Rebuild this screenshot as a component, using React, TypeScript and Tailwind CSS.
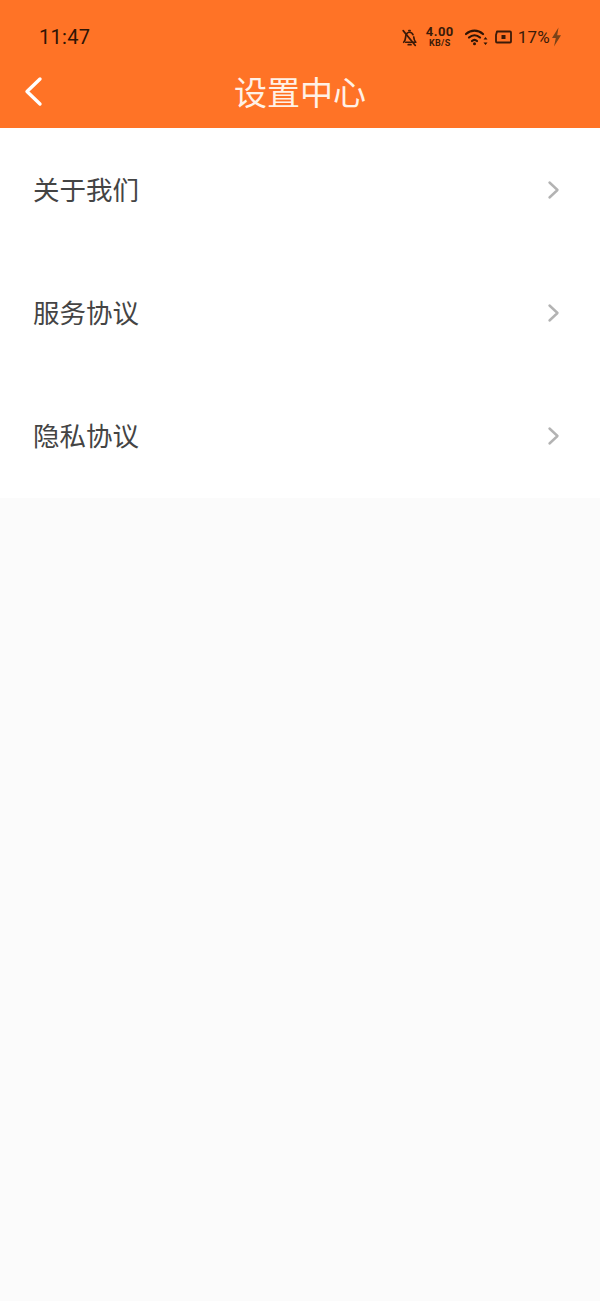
import React from 'react';

const cjk = 'font-["Noto_Sans_CJK_SC",sans-serif]';

// Status bar glyphs, drawn to match the phone's icons
const MutedBell = () => (
  <svg width="17" height="19" viewBox="0 0 16 18" fill="none" stroke="#3a1a08" strokeWidth="1.6" strokeLinecap="round" strokeLinejoin="round">
    <path d="M2.5 13.5c1.2-1.2 1.5-2.3 1.7-4.2C4.400 6.500 5.500 4 8 4c1.600 0 2.700.9 3.300 2.300" />
    <path d="M12 8.500c.2 2.200.6 3.700 2 5H4.500" />
    <path d="M6.800 15.800h2.600" />
    <path d="M7.400 2.500h1.200" />
    <path d="M2 2.500l11.500 14" />
  </svg>
);

const Wifi = () => (
  <svg width="23" height="18" viewBox="0 0 23 18" fill="none" stroke="#2e1405" strokeWidth="2.200" strokeLinecap="round">
    <path d="M1 6c5-4.500 12-4.500 17 0" />
    <path d="M4 9.500c3.300-3 7.700-3 11 0" />
    <path d="M7 13c1.600-1.500 3.400-1.500 5 0" />
    <circle cx="9.500" cy="15.800" r="1.500" fill="#2e1405" stroke="none" />
    <path d="M20.500 9l-2 2.500h4zM20.500 17l-2-2.500h4z" fill="#2e1405" stroke="none" />
  </svg>
);

const Battery = () => (
  <svg width="18" height="14" viewBox="0 0 18 14" fill="none">
    <path d="M3 1.500h13a1 1 0 0 1 1 1v9a1 1 0 0 1-1 1H3a1 1 0 0 1-1-1V5z" stroke="#3a1a08" strokeWidth="1.800" strokeLinejoin="round" />
    <rect x="7.500" y="5" width="4" height="4" fill="#3a1a08" />
  </svg>
);

const Bolt = () => (
  <svg width="11" height="20" viewBox="0 0 11 20">
    <path d="M7.500 0.500L1 11h3.800L3 19.500 10 8.200H6.200z" fill="#7a4218" />
  </svg>
);

const Chevron = () => (
  <svg width="13" height="20" viewBox="0 0 13 20" fill="none" stroke="#b3b3b3" strokeWidth="2.400" strokeLinecap="round" strokeLinejoin="round">
    <path d="M2.500 2.500L10.500 10L2.500 17.500" />
  </svg>
);

const Row = ({ label }: { label: string }) => (
  <div className="flex h-[123px] items-center justify-between pl-[33px] pr-[40px]">
    <span className={`${cjk} text-[26.5px] leading-none text-[#444444]`}>{label}</span>
    <Chevron />
  </div>
);

export default function App() {
  return (
    <div className="flex h-[1301px] w-[600px] flex-col overflow-hidden bg-[#fbfbfb]">
      <header className="h-[128px] bg-[#ff7326]">
        {/* system status bar */}
        <div className="flex h-[72px] items-center justify-between pl-[39px] pr-[38px]">
          <span className="font-['Roboto',sans-serif] text-[20px] leading-none tracking-[0.3px] text-[#2e1405] translate-y-[1px]">11:47</span>
          <div className="flex items-center translate-y-[1px]">
            <MutedBell />
            <div className="ml-[8px] flex flex-col items-center font-['Roboto',sans-serif] font-bold leading-none text-[#3a1a08]">
              <span className="text-[13px] leading-[12px] tracking-[0.5px]">4.00</span>
              <span className="text-[9px] leading-[10px] tracking-[0.3px]">KB/S</span>
            </div>
            <span className="ml-[11px] flex"><Wifi /></span>
            <span className="ml-[6px] flex"><Battery /></span>
            <span className="ml-[6px] font-['Roboto',sans-serif] text-[17px] leading-none text-[#3a1a08] tracking-[0.2px]">17%</span>
            <span className="ml-[1px] flex"><Bolt /></span>
          </div>
        </div>
        {/* title bar */}
        <div className="relative flex h-[40px] items-center justify-center">
          <svg className="absolute left-[22px] top-[3px]" width="22" height="32" viewBox="0 0 22 32" fill="none" stroke="#ffffff" strokeWidth="3.400" strokeLinecap="round" strokeLinejoin="round">
            <path d="M18 4L5 16.500L18 29" />
          </svg>
          <span className={`${cjk} text-[33px] leading-none text-[#fff1e6] -translate-y-[1px]`}>设置中心</span>
        </div>
      </header>
      <div className="h-[370px] bg-white">
        <Row label="关于我们" />
        <Row label="服务协议" />
        <Row label="隐私协议" />
      </div>
    </div>
  );
}
